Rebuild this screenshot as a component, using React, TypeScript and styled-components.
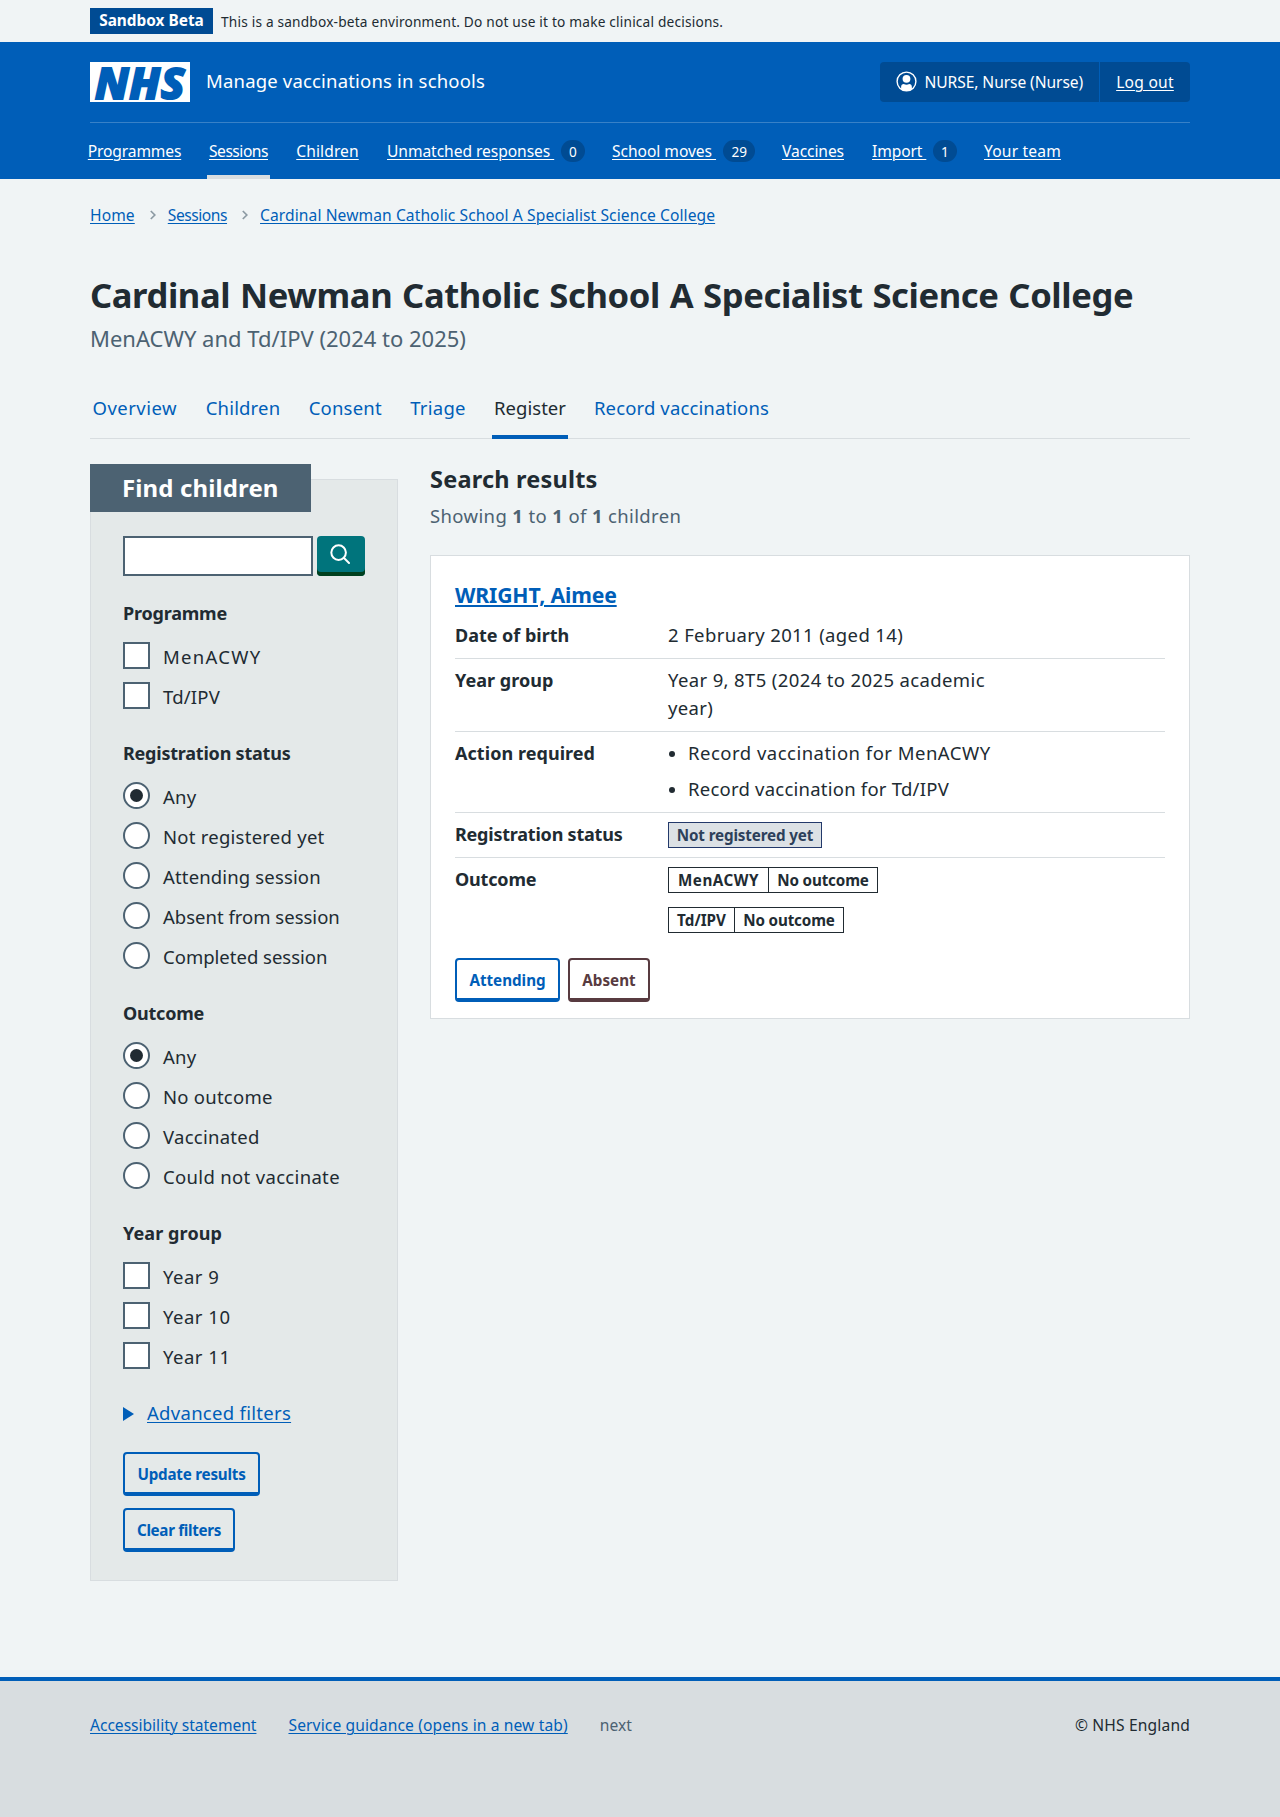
import React from "react";
import styled, { createGlobalStyle } from "styled-components";

const c = {
  blue: "#005eb8",
  darkBlue: "#004b93",
  text: "#212b32",
  secondary: "#4c6272",
  page: "#f0f4f5",
  panel: "#e4e9e9",
  line: "#d8dde0",
};

const GlobalStyle = createGlobalStyle`
  *, *::before, *::after { box-sizing: border-box; }
  body {
    margin: 0;
    background: ${c.page};
    color: ${c.text};
    font-family: "Noto Sans", "Open Sans", "Liberation Sans", sans-serif;
    font-size: 18.5px;
    line-height: 28px;
  }
  h1, h2, h3, p, ul, dl, dd, dt, fieldset, legend { margin: 0; padding: 0; border: 0; }
  ul { list-style: none; }
`;

/* Inline run of text with its own tracking */
const Track = styled.span<{ $ls?: number }>`
  letter-spacing: ${(p) => p.$ls ?? 0}px;
  white-space: pre;
`;

const Link = styled.a<{ $ls?: number; $color?: string }>`
  color: ${(p) => p.$color ?? c.blue};
  letter-spacing: ${(p) => p.$ls ?? 0}px;
  white-space: pre;
  text-decoration: underline;
  text-decoration-thickness: 1px;
  text-underline-offset: 1.5px;
`;

const Container = styled.div`
  width: 1100px;
  margin: 0 auto;
`;

const Banner = styled(Container)`
  height: 42px;
  display: flex;
  align-items: center;
  gap: 8px;
  font-size: 13.7px;
`;

const BannerText = styled(Track)`
  padding-top: 1px;
`;

const EnvTag = styled.strong`
  width: 123px;
  height: 26px;
  line-height: 26px;
  text-align: center;
  background: ${c.darkBlue};
  color: #fff;
  font-size: 15.4px;
`;

const Header = styled.header`
  background: ${c.blue};
  color: #fff;
`;

const HeaderTop = styled(Container)`
  height: 81px;
  display: flex;
  align-items: center;
  border-bottom: 1px solid rgba(255, 255, 255, 0.22);
`;

const Logo = styled.span`
  width: 100px;
  height: 40px;
  background: #fff;
  color: ${c.blue};
  display: flex;
  align-items: center;
  justify-content: center;
  font-size: 43.5px;
  font-weight: 800;
  font-style: italic;
  line-height: 40px;
  letter-spacing: 0.8px;
  padding-bottom: 1px;
  -webkit-text-stroke: 2.2px ${c.blue};
`;

const ServiceName = styled.span`
  flex: 1;
  padding: 0 0 2px 16px;
  letter-spacing: 0.18px;
`;

const Account = styled.div`
  display: flex;
  height: 40px;
  border-radius: 4px;
  background: ${c.darkBlue};
  font-size: 15.6px;
  line-height: 40px;
`;

const AccountUser = styled.span`
  width: 219px;
  display: flex;
  align-items: center;
  gap: 8px;
  padding-left: 15.5px;
  svg { flex: none; margin-top: -2px; }
`;

const AccountLogout = styled.span`
  width: 91px;
  text-align: center;
  border-left: 1px solid ${c.blue};
`;

const PrimaryNav = styled.nav`
  width: 1108px;
  margin: 0 auto;
  height: 56px;
  display: flex;
  gap: 24px;
  font-size: 15.6px;
`;

const NavItem = styled.span<{ $w: number; $current?: boolean; $split?: boolean }>`
  width: ${(p) => p.$w}px;
  padding: 0 2px;
  display: flex;
  align-items: center;
  justify-content: ${(p) => (p.$split ? "space-between" : "center")};
  box-shadow: ${(p) => (p.$current ? `inset 0 -4px ${c.line}` : "none")};
`;

const Badge = styled.span`
  min-width: 24px;
  height: 22px;
  margin-right: -1px;
  padding: 0 8px;
  border-radius: 12px;
  background: ${c.darkBlue};
  font-size: 13.6px;
  line-height: 23px;
  text-align: center;
`;

const Breadcrumb = styled.nav`
  padding-top: 24px;
  display: flex;
  font-size: 15.6px;
  line-height: 24px;
`;

const Separator = styled.span`
  width: 33px;
  padding-left: 3px;
  display: flex;
  align-items: center;
  justify-content: center;
`;

const Main = styled(Container)`
  height: 1498px;
`;

const Title = styled.h1`
  margin-top: 48px;
  font-size: 34.6px;
  line-height: 40px;
  letter-spacing: -0.4px;
  word-spacing: 1.3px;
  white-space: nowrap;
`;

const Caption = styled.p`
  margin-top: 7px;
  font-size: 22px;
  line-height: 33px;
  color: ${c.secondary};
`;

const Tabs = styled.nav`
  margin-top: 30px;
  height: 54px;
  display: flex;
  gap: 24px;
  box-shadow: inset 0 -1px ${c.line};
`;

const Tab = styled.span<{ $w: number; $current?: boolean }>`
  width: ${(p) => p.$w}px;
  padding-bottom: 8px;
  display: flex;
  align-items: center;
  justify-content: center;
  color: ${(p) => (p.$current ? c.text : c.blue)};
  box-shadow: ${(p) => (p.$current ? `inset 0 -4px ${c.blue}` : "none")};
`;

const Columns = styled.div`
  display: grid;
  grid-template-columns: 308px 760px;
  gap: 32px;
  align-items: start;
`;

const Filters = styled.aside`
  margin-top: 40px;
  padding: 0 32px 28px;
  background: ${c.panel};
  border: 1px solid ${c.line};
`;

const FiltersTitle = styled.h2`
  width: 221px;
  margin: -16px 0 24px -33px;
  padding-left: 32px;
  background: ${c.secondary};
  color: #fff;
  font-size: 24px;
  line-height: 48px;
  letter-spacing: 0.12px;
`;

const SearchRow = styled.div`
  display: flex;
  gap: 4px;
`;

const SearchInput = styled.input`
  width: 190px;
  height: 40px;
  border: 2px solid ${c.secondary};
  border-radius: 0;
  background: #fff;
`;

const SearchButton = styled.button`
  width: 48px;
  height: 40px;
  padding: 0 2px 5px 0;
  display: flex;
  align-items: center;
  justify-content: center;
  border: 0;
  border-radius: 4px;
  background: #00747c;
  box-shadow: inset 0 -4px #00401e;
`;

const Group = styled.fieldset`
  margin-top: 25px;
`;

const Legend = styled.h3<{ $ls: number }>`
  margin-bottom: 11px;
  font-size: 18px;
  line-height: 24px;
  letter-spacing: ${(p) => p.$ls}px;
`;

const Choice = styled.label`
  height: 40px;
  display: flex;
  align-items: center;
  gap: 13px;
  line-height: 40px;
`;

const Control = styled.span<{ $round?: boolean; $checked?: boolean }>`
  width: 27px;
  height: 27px;
  margin-top: -1px;
  display: grid;
  place-items: center;
  border: 2px solid ${c.secondary};
  border-radius: ${(p) => (p.$round ? "50%" : "0")};
  background: #fff;
  &::after {
    content: "";
    width: 13px;
    height: 13px;
    border-radius: 50%;
    background: ${(p) => (p.$checked ? c.text : "transparent")};
  }
`;

const ChoiceText = styled(Track)`
  padding-top: 1px;
`;

const Advanced = styled.div`
  margin: 25px 0 27px;
  display: flex;
  align-items: center;
  gap: 13px;
  line-height: 24px;
`;

const Arrow = styled.span`
  margin-top: 1px;
  border-left: 11.5px solid ${c.blue};
  border-top: 7px solid transparent;
  border-bottom: 7px solid transparent;
`;

const ButtonStack = styled.div`
  display: flex;
  flex-direction: column;
  gap: 12px;
`;

const Button = styled.button<{ $w: number; $ls?: number; $color?: string }>`
  width: ${(p) => p.$w}px;
  height: 44px;
  padding: 2px 0 0;
  border: 2px solid ${(p) => p.$color ?? c.blue};
  border-bottom-width: 4px;
  border-radius: 4px;
  background: transparent;
  color: ${(p) => p.$color ?? c.blue};
  font: 700 15.2px/24px "Noto Sans", sans-serif;
  letter-spacing: ${(p) => p.$ls ?? 0}px;
  white-space: nowrap;
`;

const ResultsTitle = styled.h2`
  margin-top: 24px;
  font-size: 23.5px;
  line-height: 32px;
  letter-spacing: 0.2px;
`;

const ResultsCount = styled.p`
  margin: 7px 0 25px;
  color: ${c.secondary};
  letter-spacing: 0.37px;
`;

const Card = styled.article`
  padding: 25px 24px 16px;
  border: 1px solid ${c.line};
  background: #fff;
`;

const PatientName = styled.h3`
  margin-bottom: 5px;
  font-size: 21.2px;
  line-height: 28px;
  ${Link} { text-decoration-thickness: 2px; text-underline-offset: 2px; }
`;

const SummaryRow = styled.div<{ $last?: boolean }>`
  display: grid;
  grid-template-columns: 213px 340px;
  padding: 7px 0 ${(p) => (p.$last ? 0 : 9)}px;
  border-bottom: ${(p) => (p.$last ? "0" : `1px solid ${c.line}`)};
`;

const Key = styled.dt<{ $ls?: number }>`
  font-weight: 700;
  font-size: 18px;
  letter-spacing: ${(p) => p.$ls ?? 0}px;
`;

const Value = styled.dd<{ $ls?: number }>`
  letter-spacing: ${(p) => p.$ls ?? 0}px;
`;

const Bullets = styled.ul`
  display: grid;
  gap: 8px;
`;

const Bullet = styled.li`
  display: flex;
  align-items: center;
  gap: 13px;
  &::before {
    content: "";
    width: 6px;
    height: 6px;
    margin: 2px 0 0 1px;
    border-radius: 50%;
    background: ${c.text};
  }
`;

const TagList = styled.div`
  padding-top: 2px;
  display: flex;
  flex-direction: column;
  align-items: flex-start;
  gap: 14px;
`;

const TagGroup = styled.span`
  display: flex;
`;

const Tag = styled.strong<{ $w: number; $ls?: number; $grey?: boolean }>`
  width: ${(p) => p.$w}px;
  height: 26px;
  border: 1px solid ${(p) => (p.$grey ? "#23396a" : c.text)};
  background: ${(p) => (p.$grey ? "#dce1e5" : "#fff")};
  color: ${(p) => (p.$grey ? "#2d405a" : c.text)};
  font-size: 15.2px;
  line-height: 25px;
  letter-spacing: ${(p) => p.$ls ?? 0}px;
  text-align: center;
  white-space: nowrap;
  & + & { margin-left: -1px; }
`;

const Actions = styled.div`
  margin-top: 25px;
  display: flex;
  gap: 8px;
`;

const Footer = styled.footer`
  height: 140px;
  padding-top: 32px;
  border-top: 4px solid ${c.blue};
  background: ${c.line};
  font-size: 15.6px;
  line-height: 24px;
`;

const FooterRow = styled(Container)`
  display: flex;
  gap: 32px;
`;

const FooterNote = styled.span`
  color: ${c.secondary};
`;

const Copyright = styled.span`
  margin-left: auto;
  letter-spacing: 0.16px;
`;

const Chevron = () => (
  <svg width="8" height="10" viewBox="0 0 8 10" fill="none" stroke="#8c9aa3" strokeWidth="1.7">
    <path d="M1.8 1l4 4-4 4" />
  </svg>
);

const UserIcon = () => (
  <svg width="21" height="21" viewBox="0 0 21 21">
    <circle cx="10.5" cy="10.5" r="9.4" fill="none" stroke="#fff" strokeWidth="1.4" />
    <circle cx="10.5" cy="7.8" r="3.9" fill="#fff" />
    <path d="M5.100 18.200v-2c0-2 1-3.100 2.700-3.100.8.5 1.700.7 2.700.7s1.900-.2 2.700-.7c1.700 0 2.700 1.100 2.700 3.100v2a9.400 9.400 0 0 1-10.800 0z" fill="#fff" />
  </svg>
);

const SearchIcon = () => (
  <svg width="20" height="20" viewBox="0 0 20 20" fill="none" stroke="#fff" strokeWidth="2" strokeLinecap="round">
    <circle cx="8.600" cy="8.600" r="7.300" />
    <path d="M14 14l5 5" />
  </svg>
);

type NavEntry = { label: string; w: number; ls: number; count?: number; current?: boolean };

const nav: NavEntry[] = [
  { label: "Programmes", w: 97, ls: -0.15 },
  { label: "Sessions", w: 63, ls: -0.48, current: true },
  { label: "Children", w: 67, ls: 0.1 },
  { label: "Unmatched responses", w: 201, ls: -0.06, count: 0 },
  { label: "School moves", w: 146, ls: -0.04, count: 29 },
  { label: "Vaccines", w: 66, ls: -0.09 },
  { label: "Import", w: 88, ls: -0.1, count: 1 },
  { label: "Your team", w: 81, ls: 0.18 },
];

const tabs: NavEntry[] = [
  { label: "Overview", w: 89.5, ls: 0.45 },
  { label: "Children", w: 79, ls: 0.16 },
  { label: "Consent", w: 77.5, ls: 0.18 },
  { label: "Triage", w: 60, ls: 0.26 },
  { label: "Register", w: 76, ls: 0.04, current: true },
  { label: "Record vaccinations", w: 179, ls: 0.13 },
];

type FilterGroup = { title: string; ls: number; radio?: boolean; options: [string, number][] };

const groups: FilterGroup[] = [
  { title: "Programme", ls: -0.2, options: [["MenACWY", 1.3], ["Td/IPV", 0.2]] },
  {
    title: "Registration status",
    ls: -0.22,
    radio: true,
    options: [
      ["Any", 0.2],
      ["Not registered yet", 0.25],
      ["Attending session", 0.15],
      ["Absent from session", 0],
      ["Completed session", 0],
    ],
  },
  {
    title: "Outcome",
    ls: -0.22,
    radio: true,
    options: [["Any", 0.2], ["No outcome", 0.25], ["Vaccinated", 0.27], ["Could not vaccinate", 0.33]],
  },
  { title: "Year group", ls: 0.1, options: [["Year 9", 0.5], ["Year 10", 0.5], ["Year 11", 0.5]] },
];

export default function App() {
  return (
    <>
      <GlobalStyle />
      <Banner>
        <EnvTag>Sandbox Beta</EnvTag>
        <BannerText $ls={0.19}>This is a sandbox-beta environment. Do not use it to make clinical decisions.</BannerText>
      </Banner>
      <Header>
        <HeaderTop>
          <Logo>NHS</Logo>
          <ServiceName>Manage vaccinations in schools</ServiceName>
          <Account>
            <AccountUser>
              <UserIcon />
              <Track $ls={-0.08}>NURSE, Nurse (Nurse)</Track>
            </AccountUser>
            <AccountLogout>
              <Link $color="#fff" $ls={0.25}>Log out</Link>
            </AccountLogout>
          </Account>
        </HeaderTop>
        <PrimaryNav>
          {nav.map((n) => (
            <NavItem key={n.label} $w={n.w} $current={n.current} $split={n.count !== undefined}>
              <Link $color="#fff" $ls={n.ls}>{n.count === undefined ? n.label : `${n.label} `}</Link>
              {n.count !== undefined && <Badge>{n.count}</Badge>}
            </NavItem>
          ))}
        </PrimaryNav>
      </Header>
      <Main>
        <Breadcrumb>
          <Link $ls={0.1}>Home</Link>
          <Separator><Chevron /></Separator>
          <Link $ls={-0.45}>Sessions</Link>
          <Separator><Chevron /></Separator>
          <Link $ls={0.09}>Cardinal Newman Catholic School A Specialist Science College</Link>
        </Breadcrumb>
        <Title>Cardinal Newman Catholic School A Specialist Science College</Title>
        <Caption>MenACWY and Td/IPV (2024 to 2025)</Caption>
        <Tabs>
          {tabs.map((t) => (
            <Tab key={t.label} $w={t.w} $current={t.current}>
              <Track $ls={t.ls}>{t.label}</Track>
            </Tab>
          ))}
        </Tabs>
        <Columns>
          <Filters>
            <FiltersTitle>Find children</FiltersTitle>
            <SearchRow>
              <SearchInput />
              <SearchButton><SearchIcon /></SearchButton>
            </SearchRow>
            {groups.map((g) => (
              <Group key={g.title}>
                <Legend $ls={g.ls}>{g.title}</Legend>
                {g.options.map(([label, ls], i) => (
                  <Choice key={label}>
                    <Control $round={g.radio} $checked={g.radio && i === 0} />
                    <ChoiceText $ls={ls}>{label}</ChoiceText>
                  </Choice>
                ))}
              </Group>
            ))}
            <Advanced>
              <Arrow />
              <Link $ls={0.29}>Advanced filters</Link>
            </Advanced>
            <ButtonStack>
              <Button $w={137} $ls={-0.22}>Update results</Button>
              <Button $w={112} $ls={-0.32}>Clear filters</Button>
            </ButtonStack>
          </Filters>
          <section>
            <ResultsTitle>Search results</ResultsTitle>
            <ResultsCount>
              Showing <b>1</b> to <b>1</b> of <b>1</b> children
            </ResultsCount>
            <Card>
              <PatientName><Link $ls={-0.15}>WRIGHT, Aimee</Link></PatientName>
              <dl>
                <SummaryRow>
                  <Key $ls={-0.02}>Date of birth</Key>
                  <Value $ls={0.37}>2 February 2011 (aged 14)</Value>
                </SummaryRow>
                <SummaryRow>
                  <Key $ls={0.05}>Year group</Key>
                  <Value $ls={0.37}>Year 9, 8T5 (2024 to 2025 academic year)</Value>
                </SummaryRow>
                <SummaryRow>
                  <Key $ls={0.05}>Action required</Key>
                  <Value>
                    <Bullets>
                      <Bullet><Track $ls={0.49}>Record vaccination for MenACWY</Track></Bullet>
                      <Bullet><Track $ls={0.23}>Record vaccination for Td/IPV</Track></Bullet>
                    </Bullets>
                  </Value>
                </SummaryRow>
                <SummaryRow>
                  <Key $ls={-0.22}>Registration status</Key>
                  <Value>
                    <TagList><Tag $w={154} $ls={-0.13} $grey>Not registered yet</Tag></TagList>
                  </Value>
                </SummaryRow>
                <SummaryRow $last>
                  <Key $ls={-0.18}>Outcome</Key>
                  <Value>
                    <TagList>
                      <TagGroup><Tag $w={101} $ls={0.5}>MenACWY</Tag><Tag $w={110} $ls={-0.15}>No outcome</Tag></TagGroup>
                      <TagGroup><Tag $w={67}>Td/IPV</Tag><Tag $w={110} $ls={-0.15}>No outcome</Tag></TagGroup>
                    </TagList>
                  </Value>
                </SummaryRow>
              </dl>
              <Actions>
                <Button $w={105}>Attending</Button>
                <Button $w={82} $color="#583b40">Absent</Button>
              </Actions>
            </Card>
          </section>
        </Columns>
      </Main>
      <Footer>
        <FooterRow>
          <Link $ls={-0.02}>Accessibility statement</Link>
          <Link $ls={0.12}>Service guidance (opens in a new tab)</Link>
          <FooterNote>next</FooterNote>
          <Copyright>© NHS England</Copyright>
        </FooterRow>
      </Footer>
    </>
  );
}
